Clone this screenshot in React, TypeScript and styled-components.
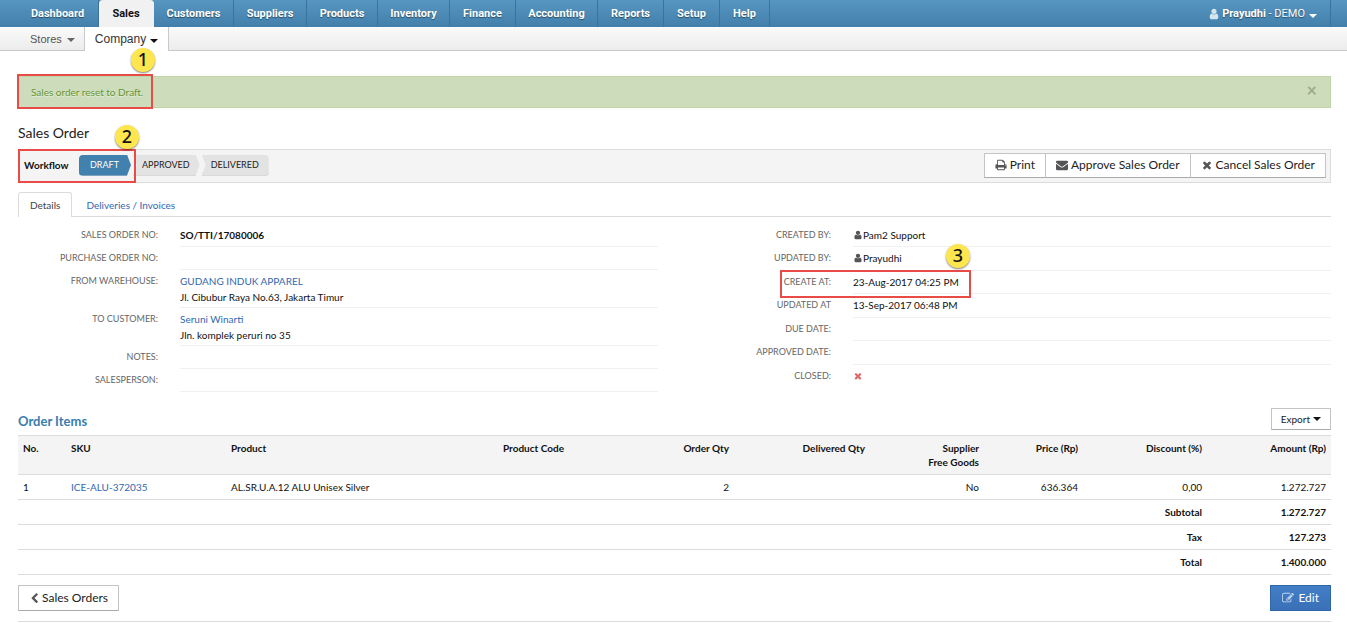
import React from "react";
import styled, { createGlobalStyle, css } from "styled-components";

const Global = createGlobalStyle`
  *, *::before, *::after { box-sizing: border-box; }
  body {
    margin: 0;
    background: #fff;
    color: #111;
    font-family: Lato, "Liberation Sans", sans-serif;
    font-size: 10px;
    line-height: 16px;
  }
  a { color: #3268b0; text-decoration: none; }
  button { font-family: inherit; cursor: pointer; }
`;

const LINE = "#dcdcdc";

/* ---------- icons ---------- */

const ICONS = {
  user: "M1536 1399q0 109-62.5 187t-150.5 78h-854q-88 0-150.5-78t-62.5-187q0-85 8.5-160.5t31.5-152 58.5-131 94-89 134.5-34.5q131 128 313 128t313-128q76 0 134.5 34.5t94 89 58.5 131 31.5 152 8.5 160.5zm-256-887q0 159-112.5 271.5t-271.5 112.5-271.5-112.5-112.5-271.5 112.5-271.5 271.5-112.5 271.5 112.5 112.5 271.5z",
  print: "M448 1536h896v-256h-896v256zm0-640h896v-384h-160q-40 0-68-28t-28-68v-160h-640v640zm1152 64q0-26-19-45t-45-19-45 19-19 45 19 45 45 19 45-19 19-45zm128 0v416q0 13-9.500 22.500t-22.500 9.500h-224v160q0 40-28 68t-68 28h-960q-40 0-68-28t-28-68v-160h-224q-13 0-22.500-9.500t-9.500-22.500v-416q0-79 56.500-135.500t135.500-56.500h64v-544q0-40 28-68t68-28h672q40 0 88 20t76 48l152 152q28 28 48 76t20 88v256h64q79 0 135.500 56.500t56.500 135.500z",
  envelope: "M1792 710v794q0 66-47 113t-113 47h-1472q-66 0-113-47t-47-113v-794q44 49 101 87 362 246 497 345 57 42 92.5 65.5t94.5 48 110 24.5h2q51 0 110-24.5t94.5-48 92.5-65.5q170-123 498-345 57-39 100-87zm0-294q0 79-49 151t-122 123q-376 261-468 325-10 7-42.5 31t-54 38.5-52 32.5-57.5 27-50 9h-2q-23 0-50-9t-57.5-27-52-32.5-54-38.5-42.5-31q-91-64-262-182.5t-205-142.5q-62-42-117-115.5t-55-136.5q0-78 41.5-130t118.5-52h1472q65 0 112.5 47t47.5 113z",
  times: "M1490 1322q0 40-28 68l-136 136q-28 28-68 28t-68-28l-294-294-294 294q-28 28-68 28t-68-28l-136-136q-28-28-28-68t28-68l294-294-294-294q-28-28-28-68t28-68l136-136q28-28 68-28t68 28l294 294 294-294q28-28 68-28t68 28l136 136q28 28 28 68t-28 68l-294 294 294 294q28 28 28 68z",
  chevron: "M1427 301l-531 531 531 531q19 19 19 45t-19 45l-166 166q-19 19-45 19t-45-19l-742-742q-19-19-19-45t19-45l742-742q19-19 45-19t45 19l166 166q19 19 19 45t-19 45z",
  edit: "M888 1184l116-116-152-152-116 116v56h96v96h56zm440-720q-16-16-33 1l-350 350q-17 17-1 33t33-1l350-350q17-17 1-33zm80 594v190q0 119-84.5 203.5t-203.5 84.5h-832q-119 0-203.5-84.5t-84.5-203.5v-832q0-119 84.5-203.5t203.5-84.5h832q63 0 117 25 15 7 18 23 3 17-9 29l-49 49q-14 14-32 8-23-6-45-6h-832q-66 0-113 47t-47 113v832q0 66 47 113t113 47h832q66 0 113-47t47-113v-126q0-13 9-22l64-64q15-15 35-7t20 29zm-96-738l288 288-672 672h-288v-288zm444 132l-92 92-288-288 92-92q28-28 68-28t68 28l152 152q28 28 28 68t-28 68z",
};

const Glyph = styled.svg<{ $size: number; $color: string }>`
  width: ${(p) => p.$size}px;
  height: ${(p) => p.$size}px;
  fill: ${(p) => p.$color};
  flex: none;
`;

function Icon({ name, size = 12, color = "#555" }: { name: keyof typeof ICONS; size?: number; color?: string }) {
  return (
    <Glyph $size={size} $color={color} viewBox="0 0 1792 1792" aria-hidden="true">
      <path d={ICONS[name]} />
    </Glyph>
  );
}

const Caret = styled.span<{ $color: string; $drop?: number }>`
  width: 0;
  height: 0;
  margin-top: ${(p) => p.$drop ?? 0}px;
  border: 4px solid transparent;
  border-top-color: ${(p) => p.$color};
  border-bottom: 0;
`;

/* ---------- annotations ---------- */

const Highlight = styled.div<{ $x: number; $y: number; $w: number; $h: number }>`
  position: absolute;
  left: ${(p) => p.$x}px;
  top: ${(p) => p.$y}px;
  width: ${(p) => p.$w}px;
  height: ${(p) => p.$h}px;
  border: 2px solid #e94b47;
  pointer-events: none;
  z-index: 2;
`;

const Marker = styled.div<{ $x: number; $y: number }>`
  position: absolute;
  left: ${(p) => p.$x}px;
  top: ${(p) => p.$y}px;
  width: 24px;
  height: 24px;
  border-radius: 50%;
  background: #fee74e;
  box-shadow: 0 1px 2px rgba(0, 0, 0, 0.5);
  color: #111;
  font: 500 18px/23px "Noto Sans", sans-serif;
  text-align: center;
  z-index: 3;
`;

/* ---------- navigation ---------- */

const NavBar = styled.nav`
  display: flex;
  height: 27px;
  padding: 0 16px 0 17px;
  background: linear-gradient(#5896c2, #4280ab);
  font: 700 11px/27px Roboto, "Liberation Sans", sans-serif;
`;

const NavItem = styled.a<{ $width: number; $active?: boolean }>`
  width: ${(p) => p.$width}px;
  flex: none;
  border-right: 1px solid #3a739c;
  color: #fff;
  text-align: center;
  text-shadow: 0 1px 1px rgba(0, 0, 0, 0.45);
  ${(p) =>
    p.$active &&
    css`
      border-right-color: #f1f1f1;
      border-radius: 4px 4px 0 0;
      background: #f1f1f1;
      color: #111;
      text-shadow: none;
    `}
`;

const Account = styled.button`
  display: flex;
  align-items: center;
  margin-left: auto;
  padding: 0 13px 0 0;
  border: 0;
  border-right: 1px solid #3a739c;
  background: none;
  color: #fff;
  font: 400 11px/26px Roboto, "Liberation Sans", sans-serif;
  text-shadow: 0 1px 1px rgba(0, 0, 0, 0.45);
  gap: 4px;
`;

const AccountName = styled.span`
  display: flex;
  align-items: center;
  gap: 2px;
`;

const SubNav = styled.nav`
  display: flex;
  position: relative;
  height: 24px;
  padding-left: 18px;
  border-bottom: 1px solid #c9c9c9;
  background: linear-gradient(#fafafa, #ececec);
`;

const SubItem = styled.button<{ $active?: boolean }>`
  display: flex;
  align-items: center;
  height: 23px;
  padding: 0 9px 0 12px;
  border: 0;
  background: none;
  color: #555;
  font: 11px/22px "Liberation Sans", sans-serif;
  gap: 5px;
  ${(p) =>
    p.$active &&
    css`
      height: 24px;
      padding: 0 10px;
      border: 1px solid #c9c9c9;
      border-width: 0 1px;
      background: #fff;
      color: #333;
      font: 500 12px/22px "Liberation Sans", sans-serif;
      gap: 4px;
    `}
`;

/* ---------- page ---------- */

const Page = styled.main`
  padding: 25px 16px 0 18px;
`;

const Alert = styled.div`
  display: flex;
  position: relative;
  justify-content: space-between;
  align-items: center;
  height: 32px;
  padding: 0 13px 0 12px;
  border: 1px solid #c0d5a8;
  background: #cdddbc;
  color: #669533;
  text-shadow: 0 1px 0 rgba(255, 255, 255, 0.5);
`;

const CloseButton = styled.button`
  padding: 0 0 4px;
  border: 0;
  background: none;
  color: #9bab8d;
  font: 700 18px/16px Lato, sans-serif;
`;

const Title = styled.h1`
  margin: 16px 0 7px;
  color: #222;
  font-size: 14px;
  font-weight: 400;
  line-height: 18px;
`;

const WorkflowBar = styled.section`
  display: flex;
  position: relative;
  align-items: center;
  height: 34px;
  padding: 0 4px 2px 5px;
  border: 1px solid ${LINE};
  background: #f4f4f4;
`;

const WorkflowLabel = styled.strong`
  width: 55px;
  font-weight: 700;
`;

const Steps = styled.ol`
  display: flex;
  margin: 0;
  padding: 0;
  list-style: none;
  font-size: 9px;
  line-height: 20px;
  gap: 2px;
`;

const stepShape = {
  first: "polygon(0 0, calc(100% - 4px) 0, 100% 50%, calc(100% - 4px) 100%, 0 100%)",
  middle: "polygon(0 0, calc(100% - 4px) 0, 100% 50%, calc(100% - 4px) 100%, 0 100%, 4px 50%)",
  last: "polygon(0 0, 100% 0, 100% 100%, 0 100%, 4px 50%)",
};

const Step = styled.li<{ $shape: keyof typeof stepShape; $current?: boolean }>`
  height: 21px;
  padding: ${(p) => (p.$shape === "first" ? "0 12px 0 11px" : "0 10px 0 9px")};
  border-bottom: 1px solid ${(p) => (p.$current ? "#3a739c" : "#c4c4c4")};
  border-radius: ${(p) => (p.$shape === "first" ? "4px 0 0 4px" : p.$shape === "last" ? "0 4px 4px 0" : "0")};
  background: ${(p) => (p.$current ? "#4281ad" : "#e3e3e3")};
  color: ${(p) => (p.$current ? "#fff" : "#222")};
  clip-path: ${(p) => stepShape[p.$shape]};
`;

const Button = styled.button<{ $primary?: boolean; $small?: boolean }>`
  display: flex;
  align-items: center;
  justify-content: center;
  height: ${(p) => (p.$small ? 22 : 26)}px;
  padding: 0 ${(p) => (p.$small ? 9 : 10)}px;
  border: 1px solid #c4c4c4;
  border-bottom-color: #aaa;
  background: #fff;
  color: #222;
  font-size: ${(p) => (p.$small ? 10 : 12)}px;
  line-height: 20px;
  gap: ${(p) => (p.$small ? 3 : 2)}px;
  ${(p) =>
    p.$primary &&
    css`
      padding: 0 11px;
      border-color: #2f66a8;
      background: linear-gradient(#427ec6, #3a70b8);
      color: #fff;
      gap: 4px;
    `}
`;

const ButtonGroup = styled.div`
  display: flex;
  margin-left: auto;
  ${Button} {
    height: 25px;
    gap: 3px;
  }
  ${Button} + ${Button} {
    margin-left: -1px;
  }
`;

const Tabs = styled.div`
  display: flex;
  height: 25px;
  margin-top: 9px;
  border-bottom: 1px solid ${LINE};
`;

const Tab = styled.a<{ $active?: boolean }>`
  padding: 5px 14px 0;
  line-height: 16px;
  ${(p) =>
    p.$active &&
    css`
      height: 25px;
      padding: 4px 11px 0;
      border: 1px solid ${LINE};
      border-bottom: 0;
      border-radius: 3px 3px 0 0;
      background: #fff;
      color: #444;
    `}
`;

const Details = styled.section`
  display: grid;
  position: relative;
  grid-template-columns: 1fr 1fr;
  column-gap: 33px;
  padding-top: 7px;
`;

const Fields = styled.dl<{ $even?: boolean }>`
  display: grid;
  margin: 0;
  ${(p) =>
    p.$even &&
    css`
      grid-auto-rows: 1fr;
      padding-bottom: 4px;
    `}
`;

const Field = styled.div`
  display: grid;
  position: relative;
  grid-template-columns: 140px 1fr;
  column-gap: 22px;
  min-height: 23px;
`;

const FieldLabel = styled.dt`
  color: #666;
  font-size: 9px;
  line-height: 21px;
  text-align: right;
`;

const FieldValue = styled.dd<{ $strong?: boolean; $plain?: boolean }>`
  margin: 0;
  padding: 3px 0 2px;
  border-bottom: 1px solid ${(p) => (p.$plain ? "transparent" : "#f0f0f0")};
  font-weight: ${(p) => (p.$strong ? 700 : 400)};
`;

const Person = styled.span`
  display: flex;
  align-items: center;
  min-height: 16px;
`;

const SectionHead = styled.header`
  display: flex;
  justify-content: space-between;
  align-items: center;
  margin: 16px 0 5px;
`;

const SectionTitle = styled.h2`
  margin: 0;
  padding-top: 4px;
  color: #3a7dae;
  font-size: 13px;
  font-weight: 700;
  line-height: 18px;
`;

const Items = styled.table`
  width: 100%;
  border-collapse: collapse;
  table-layout: fixed;
  border-top: 1px solid ${LINE};
  line-height: 14px;
`;

const ItemRow = styled.tr`
  border-bottom: 1px solid ${LINE};
`;

const HeadCell = styled.th<{ $width: number; $right?: boolean }>`
  width: ${(p) => p.$width}px;
  height: 39px;
  padding: 5px 5px 0;
  background: #f4f4f4;
  font-weight: 700;
  text-align: ${(p) => (p.$right ? "right" : "left")};
  vertical-align: top;
`;

const Cell = styled.td<{ $right?: boolean; $strong?: boolean }>`
  height: 25px;
  padding: 5px;
  font-weight: ${(p) => (p.$strong ? 700 : 400)};
  text-align: ${(p) => (p.$right ? "right" : "left")};
`;

const Actions = styled.footer`
  display: flex;
  justify-content: space-between;
  padding: 10px 0;
  border-bottom: 1px solid ${LINE};
`;

/* ---------- data ---------- */

const NAV: [string, number][] = [
  ["Dashboard", 82],
  ["Sales", 55],
  ["Customers", 80],
  ["Suppliers", 73],
  ["Products", 71],
  ["Inventory", 72],
  ["Finance", 66],
  ["Accounting", 82],
  ["Reports", 66],
  ["Setup", 56],
  ["Help", 50],
];

const COLUMNS: [React.ReactNode, number, boolean][] = [
  ["No.", 48, false],
  ["SKU", 160, false],
  ["Product", 272, false],
  ["Product Code", 136, false],
  ["Order Qty", 100, true],
  ["Delivered Qty", 136, true],
  [<>Supplier<br />Free Goods</>, 114, true],
  ["Price (Rp)", 99, true],
  ["Discount (%)", 124, true],
  ["Amount (Rp)", 124, true],
];

const TOTALS = [
  ["Subtotal", "1.272.727"],
  ["Tax", "127.273"],
  ["Total", "1.400.000"],
];

export default function App() {
  return (
    <>
      <Global />
      <NavBar aria-label="Main">
        {NAV.map(([name, width]) => (
          <NavItem key={name} href="#" $width={width} $active={name === "Sales"}>
            {name}
          </NavItem>
        ))}
        <Account>
          <AccountName>
            <Icon name="user" size={12} color="#d5e5f0" />
            <span><b>Prayudhi</b> - DEMO</span>
          </AccountName>
          <Caret $color="#fff" $drop={4} />
        </Account>
      </NavBar>
      <SubNav aria-label="Sales">
        <SubItem>
          Stores <Caret $color="#666" $drop={3} />
        </SubItem>
        <SubItem $active>
          Company <Caret $color="#111" $drop={3} />
        </SubItem>
        <Marker $x={131} $y={21}>1</Marker>
      </SubNav>

      <Page>
        <Alert role="status">
          <span>Sales order reset to Draft.</span>
          <CloseButton aria-label="Close">×</CloseButton>
          <Highlight $x={-2} $y={-3} $w={136} $h={35} />
        </Alert>

        <Title>Sales Order</Title>

        <WorkflowBar>
          <WorkflowLabel>Workflow</WorkflowLabel>
          <Steps>
            <Step $shape="first" $current>DRAFT</Step>
            <Step $shape="middle">APPROVED</Step>
            <Step $shape="last">DELIVERED</Step>
          </Steps>
          <ButtonGroup>
            <Button><Icon name="print" />Print</Button>
            <Button><Icon name="envelope" />Approve Sales Order</Button>
            <Button><Icon name="times" />Cancel Sales Order</Button>
          </ButtonGroup>
          <Highlight $x={-1} $y={-1} $w={118} $h={34} />
          <Marker $x={96} $y={-25}>2</Marker>
        </WorkflowBar>

        <Tabs>
          <Tab href="#" $active>Details</Tab>
          <Tab href="#">Deliveries / Invoices</Tab>
        </Tabs>

        <Details>
          <Fields>
            <Field>
              <FieldLabel>SALES ORDER NO:</FieldLabel>
              <FieldValue $strong>SO/TTI/17080006</FieldValue>
            </Field>
            <Field>
              <FieldLabel>PURCHASE ORDER NO:</FieldLabel>
              <FieldValue />
            </Field>
            <Field>
              <FieldLabel>FROM WAREHOUSE:</FieldLabel>
              <FieldValue>
                <a href="#">GUDANG INDUK APPAREL</a>
                <br />
                Jl. Cibubur Raya No.63, Jakarta Timur
              </FieldValue>
            </Field>
            <Field>
              <FieldLabel>TO CUSTOMER:</FieldLabel>
              <FieldValue>
                <a href="#">Seruni Winarti</a>
                <br />
                Jln. komplek peruri no 35
              </FieldValue>
            </Field>
            <Field>
              <FieldLabel>NOTES:</FieldLabel>
              <FieldValue />
            </Field>
            <Field>
              <FieldLabel>SALESPERSON:</FieldLabel>
              <FieldValue />
            </Field>
          </Fields>
          <Fields $even>
            <Field>
              <FieldLabel>CREATED BY:</FieldLabel>
              <FieldValue>
                <Person><Icon name="user" size={10} />Pam2 Support</Person>
              </FieldValue>
            </Field>
            <Field>
              <FieldLabel>UPDATED BY:</FieldLabel>
              <FieldValue>
                <Person><Icon name="user" size={10} />Prayudhi</Person>
              </FieldValue>
            </Field>
            <Field>
              <FieldLabel>CREATE AT:</FieldLabel>
              <FieldValue>23-Aug-2017 04:25 PM</FieldValue>
              <Highlight $x={89} $y={-1} $w={191} $h={28} />
              <Marker $x={255} $y={-27}>3</Marker>
            </Field>
            <Field>
              <FieldLabel>UPDATED AT</FieldLabel>
              <FieldValue>13-Sep-2017 06:48 PM</FieldValue>
            </Field>
            <Field>
              <FieldLabel>DUE DATE:</FieldLabel>
              <FieldValue />
            </Field>
            <Field>
              <FieldLabel>APPROVED DATE:</FieldLabel>
              <FieldValue />
            </Field>
            <Field>
              <FieldLabel>CLOSED:</FieldLabel>
              <FieldValue $plain>
                <Person><Icon name="times" size={10} color="#df6a6a" /></Person>
              </FieldValue>
            </Field>
          </Fields>
        </Details>

        <SectionHead>
          <SectionTitle>Order Items</SectionTitle>
          <Button $small>
            Export <Caret $color="#111" />
          </Button>
        </SectionHead>

        <Items>
          <thead>
            <ItemRow>
              {COLUMNS.map(([name, width, right], i) => (
                <HeadCell key={i} scope="col" $width={width} $right={right}>
                  {name}
                </HeadCell>
              ))}
            </ItemRow>
          </thead>
          <tbody>
            <ItemRow>
              <Cell>1</Cell>
              <Cell><a href="#">ICE-ALU-372035</a></Cell>
              <Cell>AL.SR.U.A.12 ALU Unisex Silver</Cell>
              <Cell />
              <Cell $right>2</Cell>
              <Cell />
              <Cell $right>No</Cell>
              <Cell $right>636.364</Cell>
              <Cell $right>0,00</Cell>
              <Cell $right>1.272.727</Cell>
            </ItemRow>
            {TOTALS.map(([name, amount]) => (
              <ItemRow key={name}>
                <Cell colSpan={9} $right $strong>{name}</Cell>
                <Cell $right $strong>{amount}</Cell>
              </ItemRow>
            ))}
          </tbody>
        </Items>

        <Actions>
          <Button><Icon name="chevron" size={11} />Sales Orders</Button>
          <Button $primary><Icon name="edit" size={12} color="#c6d9f0" />Edit</Button>
        </Actions>
      </Page>
    </>
  );
}
